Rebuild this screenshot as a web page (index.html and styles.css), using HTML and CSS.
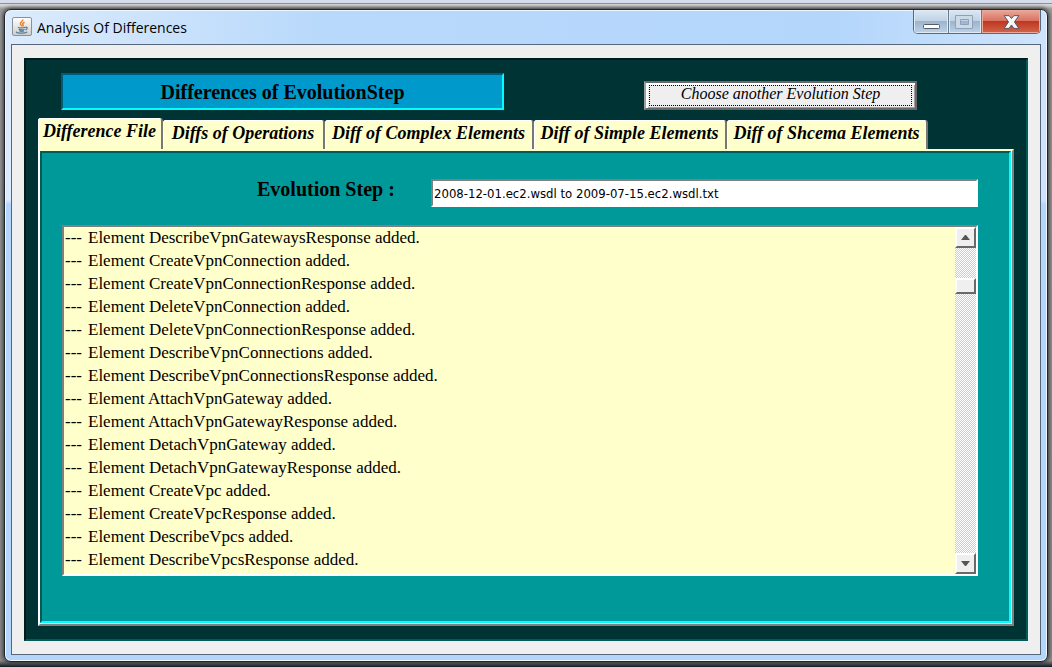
FILE: index.html
```html
<!DOCTYPE html>
<html lang="en">
<head>
<meta charset="utf-8">
<title>Analysis Of Differences</title>
<link rel="stylesheet" href="styles.css">
</head>
<body>
<main class="window">
  <header class="titlebar">
    <svg class="app-icon" viewBox="0 0 20 20" aria-hidden="true">
      <defs>
        <linearGradient id="tile" x1="0" y1="0" x2="0" y2="1"><stop offset="0" stop-color="#ffffff"/><stop offset="1" stop-color="#cdcdcd"/></linearGradient>
      </defs>
      <rect x="0.5" y="0.5" width="19" height="18" rx="1.5" fill="url(#tile)" stroke="#8b9097"/>
      <path d="M10.6 2.5c1 1.700-2.700 2.700-2.200 4.400.2.900 1.100 1.500 1.300 2.300M12.600 5.200c-1.800.8-2.300 1.600-1.600 2.500.5.700.2 1.200-.4 1.700" fill="none" stroke="#e8832a" stroke-width="1.500"/>
      <path d="M6 10.300c1.500.9 5.500.8 7.200 0M6.800 12.100c1.500.8 4.400.8 5.900.1M7.300 13.800c1.300.6 3.400.6 4.700.1M13.300 10.300c2.500-.6 2.400 1.900.2 2.500M4.800 14.700c-2.500 1.400 7.400 2.300 10.400.3" fill="none" stroke="#557f9d" stroke-width="1.200"/>
    </svg>
    <h1 class="title">Analysis Of Differences</h1>
    <div class="controls">
      <button class="ctl" aria-label="Minimize"><svg viewBox="0 0 34 24"><rect x="9.500" y="14.500" width="16" height="4" rx="1" fill="#fff" stroke="#565c6a"/></svg></button>
      <button class="ctl ctl-max" aria-label="Maximize" disabled><svg viewBox="0 0 32 24"><path d="M6.500 5.500h17v13h-17zM11.500 9.500v5h8v-5z" fill="#ccdae7" fill-rule="evenodd" stroke="#8da2b8"/></svg></button>
      <button class="ctl ctl-close" aria-label="Close"><svg viewBox="0 0 59 24"><path d="M22.500 5.500h5l2.500 3 2.500-3h5l-4.500 6.500 4.500 6.500h-5l-2.500-3.500-2.500 3.500h-5l4.500-6.500z" fill="#f7f7f7" stroke="#535666" stroke-linejoin="round"/></svg></button>
    </div>
  </header>
  <section class="client">
    <div class="panel">
      <div class="toprow">
        <h2 class="banner">Differences of EvolutionStep</h2>
        <div class="choose-area"><button class="choose"><span>Choose another Evolution Step</span></button></div>
      </div>
      <div class="tabs" role="tablist">
        <button class="tab tab-active tab-file" role="tab" aria-selected="true">Difference File</button>
        <button class="tab tab-ops" role="tab">Diffs of Operations</button>
        <button class="tab tab-complex" role="tab">Diff of Complex Elements</button>
        <button class="tab tab-simple" role="tab">Diff of Simple Elements</button>
        <button class="tab tab-schema" role="tab">Diff of Shcema Elements</button>
      </div>
      <div class="tabpanel" role="tabpanel">
        <div class="page">
          <div class="field">
            <label for="step">Evolution Step :</label>
            <input id="step" type="text" value="2008-12-01.ec2.wsdl to 2009-07-15.ec2.wsdl.txt">
          </div>
          <div class="listbox">
            <ul class="rows">
              <li>Element DescribeVpnGatewaysResponse added.</li>
              <li>Element CreateVpnConnection added.</li>
              <li>Element CreateVpnConnectionResponse added.</li>
              <li>Element DeleteVpnConnection added.</li>
              <li>Element DeleteVpnConnectionResponse added.</li>
              <li>Element DescribeVpnConnections added.</li>
              <li>Element DescribeVpnConnectionsResponse added.</li>
              <li>Element AttachVpnGateway added.</li>
              <li>Element AttachVpnGatewayResponse added.</li>
              <li>Element DetachVpnGateway added.</li>
              <li>Element DetachVpnGatewayResponse added.</li>
              <li>Element CreateVpc added.</li>
              <li>Element CreateVpcResponse added.</li>
              <li>Element DescribeVpcs added.</li>
              <li>Element DescribeVpcsResponse added.</li>
            </ul>
            <div class="scrollbar">
              <button class="sb-btn" aria-label="Scroll up"><svg viewBox="0 0 9 5"><path d="M0 5h9L5 0H4z"/></svg></button>
              <div class="track"><div class="thumb"></div></div>
              <button class="sb-btn" aria-label="Scroll down"><svg viewBox="0 0 9 5"><path d="M0 0h9L5 5H4z"/></svg></button>
            </div>
          </div>
        </div>
      </div>
    </div>
  </section>
</main>
</body>
</html>
```
FILE: styles.css
```css
* { box-sizing: border-box; }
html, body { height: 100%; margin: 0; }
body {
  display: flex;
  padding: 9px 4px 5px;
  background: linear-gradient(#d5dcec 0 3px, #8d8f99 3px 4px, #d8d8d8 4px 5px, #9c9c9c 9px, #8c8c8c 99%, #10181f 100%);
  font-family: "Palatino Linotype", Palatino, "Liberation Serif", serif;
  color: #000;
  overflow: hidden;
}
button { font: inherit; color: inherit; padding: 0; margin: 0; }
h1, h2, ul { margin: 0; padding: 0; font-weight: normal; }

.window {
  flex: 1;
  display: flex;
  flex-direction: column;
  padding: 0 6px 6px;
  border: 1px solid #20252b;
  border-radius: 7px;
  background:
    linear-gradient(transparent 190px, #b4d6fb 194px),
    linear-gradient(90deg, #dcebfc, #b9d9fb 30%, #b4d6fb 80%, #cfe4fc);
  box-shadow: inset 0 0 0 1px #eef6ff, 0 0 4px 1px #333;
}
.titlebar { display: flex; height: 34px; }
.app-icon { width: 20px; height: 20px; margin: 7px 5px 0 1px; }
.title {
  flex: 1;
  font-family: "Segoe UI", "Open Sans", sans-serif;
  font-size: 14px;
  line-height: 36px;
}
.controls {
  display: flex;
  height: 24px;
  border: 1px solid #59697c;
  border-top: 0;
  border-radius: 0 0 5px 5px;
  overflow: hidden;
}
.ctl {
  width: 35px;
  border: 0;
  border-right: 1px solid #69798d;
  background: linear-gradient(#dce8f4, #bfd1e4 48%, #9cb4cd 50%, #bdd2e8);
  box-shadow: inset 0 0 0 1px #dfeaf5;
}
.ctl svg { display: block; width: 100%; height: 24px; }
.ctl-max { width: 33px; }
.ctl-close {
  width: 58px;
  border: 0;
  background: linear-gradient(#e9a99b, #d9705f 48%, #bd3722 50%, #d4654a);
  box-shadow: inset 0 0 0 1px #eaa99c;
}

.client {
  flex: 1;
  display: flex;
  padding: 13px 12px;
  border: 1px solid #56677c;
  background: #efefef;
}
.panel {
  flex: 1;
  display: flex;
  flex-direction: column;
  padding: 13px 12px;
  border: 2px solid;
  border-color: #001c1c #005b59 #005b59 #001c1c;
  background: #003333;
}
.toprow { display: flex; align-items: flex-start; height: 45px; padding-left: 23px; }
.banner {
  flex: 0 1 443px;
  height: 37px;
  border: 2px solid;
  border-color: #005b7a #00ffff #00ffff #005b7a;
  background: #0099cc;
  font-weight: bold;
  font-size: 20px;
  line-height: 34px;
  text-align: center;
}
.choose-area { flex: 1; padding: 8px 97px 0 140px; }
.choose {
  display: block;
  width: 100%;
  height: 29px;
  padding: 1px;
  border: 2px solid;
  border-color: #696969 #696969 #696969 #a0a0a0;
  background: #efefef;
  box-shadow: inset 2px 2px #fff, inset -1px -1px #a0a0a0;
}
.choose span {
  display: block;
  height: 21px;
  margin: 1px 2px;
  border: 1px dotted #000;
  font-size: 16px;
  font-style: italic;
  line-height: 15px;
}

.tabs { display: flex; align-items: flex-end; height: 31px; }
.tab {
  height: 29px;
  padding-bottom: 3px;
  border: 0;
  border-right: 2px solid #777;
  border-radius: 3px 3px 0 0;
  background: #ffffcc;
  box-shadow: inset 1px 1px #fff;
  font-size: 18px;
  font-weight: bold;
  font-style: italic;
  line-height: 26px;
  white-space: nowrap;
}
.tab-active { height: 31px; padding-bottom: 5px; }
.tab-file { width: 125px; }
.tab-ops { width: 162px; }
.tab-complex { width: 209px; }
.tab-simple { width: 193px; }
.tab-schema { width: 201px; }

.tabpanel {
  flex: 1;
  display: flex;
  border: 2px solid;
  border-color: #ffffcc #808080 #808080 #fff;
  box-shadow: inset -1px -1px #ffffcc;
  padding: 0 1px 1px 0;
}
.page {
  flex: 1;
  display: flex;
  flex-direction: column;
  gap: 18px;
  padding: 26px 31px 45px 20px;
  border: 2px solid;
  border-color: #005b5b #00ffff #00ffff #005b5b;
  background: #009999;
}
.field { display: flex; align-items: flex-start; }
.field label {
  flex: 0 0 369px;
  padding-left: 195px;
  font-size: 20px;
  font-weight: bold;
  line-height: 20px;
}
.field input {
  flex: 1;
  min-width: 0;
  height: 28px;
  padding: 0 1px;
  border: 2px solid;
  border-color: #808080 #fff #fff #808080;
  border-radius: 0;
  background: #fff;
  font: 13px Tahoma, "DejaVu Sans Condensed", "Noto Sans", sans-serif;
  color: #000;
}
.listbox {
  flex: 1;
  display: flex;
  min-height: 0;
  border: 2px solid;
  border-color: #808080 #fff #fff #808080;
  background: #ffffcc;
}
.rows {
  flex: 1;
  overflow: hidden;
  list-style: none;
  padding-left: 1px;
  font-size: 17px;
  line-height: 22px;
}
.rows li { display: flex; padding-bottom: 1px; }
.rows li::before { content: "---"; width: 23px; }
.scrollbar { display: flex; flex-direction: column; width: 21px; }
.sb-btn, .thumb {
  border: 2px solid;
  border-color: #fff #696969 #696969 #fff;
  background: #efefef;
}
.sb-btn { height: 21px; }
.sb-btn svg { display: block; width: 9px; height: 5px; margin: 0 auto; fill: #555; }
.track {
  flex: 1;
  padding-top: 30px;
  background: conic-gradient(#fff 25%, #ccc 0 50%, #fff 0 75%, #ccc 0) 0 0 / 2px 2px;
}
.thumb { height: 16px; }
```
